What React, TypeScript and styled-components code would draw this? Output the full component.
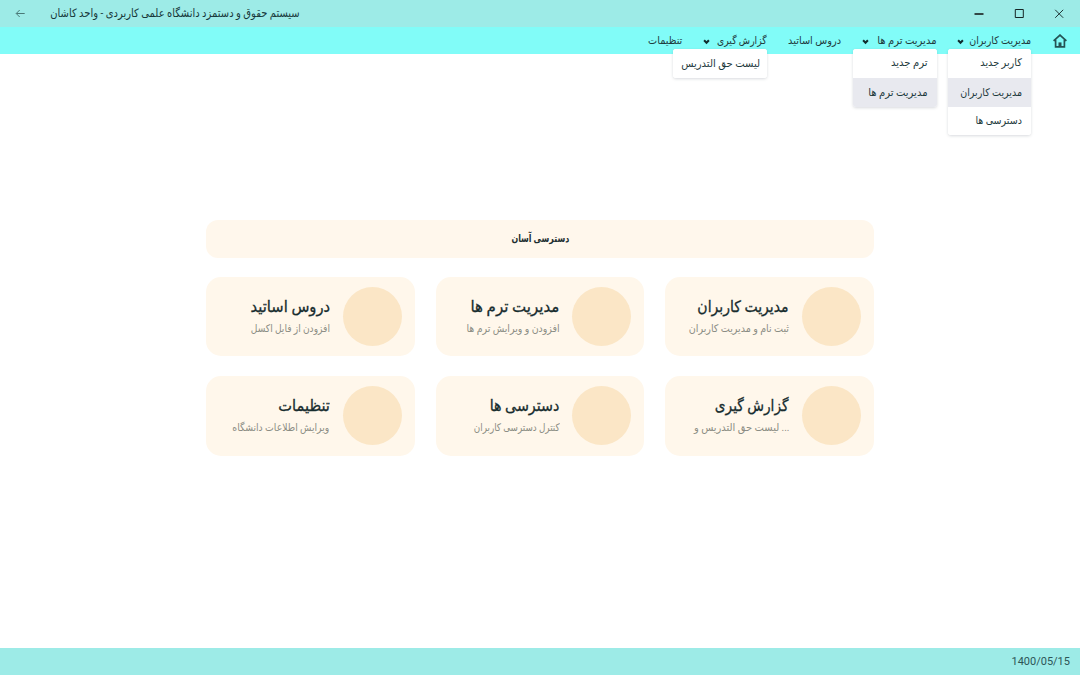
import React from 'react';
import styled, { createGlobalStyle } from 'styled-components';

const GlobalStyle = createGlobalStyle`
  * { box-sizing: border-box; }
  html, body, #root { height: 100%; }
  body {
    margin: 0;
    background: #fff;
    color: #1e3a3d;
    font-family: Roboto, "DejaVu Sans", sans-serif;
    overflow: hidden;
  }
`;

const Window = styled.div`
  display: flex;
  flex-direction: column;
  height: 100vh;
`;

const TitleBar = styled.header`
  display: flex;
  align-items: center;
  height: 27px;
  padding: 0 16px 0 15px;
  background: #9debe7;
`;

const AppTitle = styled.h1`
  margin: 0 auto 0 26px;
  color: #17383a;
  font-weight: 400;
`;

const Controls = styled.div`
  display: flex;
  align-items: center;
  gap: 30px;
`;

const NavBar = styled.nav`
  display: flex;
  direction: rtl;
  align-items: center;
  height: 27px;
  padding-right: 13px;
  background: #81fcf8;
`;

const HomeLink = styled.a`
  display: flex;
  margin-left: 22px;
`;

const NavItem = styled.div<{ $gap: number }>`
  position: relative;
  display: flex;
  align-items: center;
  height: 27px;
  margin-left: ${(p) => p.$gap}px;
`;

const Chevron = styled.svg<{ $gap: number }>`
  margin: 3px ${(p) => p.$gap}px 0 0;
`;

const TextBox = styled.span<{ $w: number; $size: number }>`
  display: flex;
  direction: rtl;
  flex: none;
  width: ${(p) => p.$w}px;
  height: 20px;
  line-height: 20px;
  font-size: ${(p) => p.$size}px;
  white-space: nowrap;
`;

const Glyphs = styled.span<{ $sx: number; $ltr?: boolean }>`
  flex: none;
  direction: ${(p) => (p.$ltr ? 'ltr' : 'rtl')};
  transform: scale(${(p) => p.$sx}, 1.06);
  transform-origin: right center;
`;

type LabelProps = { text: string; width: number; size: number; sx?: number; ltr?: boolean };
const Label = ({ text, width, size, sx = 1, ltr }: LabelProps) => (
  <TextBox $w={width} $size={size}>
    <Glyphs $sx={sx} $ltr={ltr}>{text}</Glyphs>
  </TextBox>
);

const Menu = styled.div<{ $w: number }>`
  position: absolute;
  z-index: 1;
  top: 22px;
  right: 0;
  width: ${(p) => p.$w}px;
  overflow: hidden;
  background: #fff;
  border-radius: 3px;
  box-shadow: 0 1px 3px rgba(40, 50, 70, 0.18);
`;

const MenuItem = styled.div<{ $h: number; $active?: boolean; $pad?: number; $lift?: number }>`
  display: flex;
  align-items: center;
  height: ${(p) => p.$h}px;
  padding: 0 ${(p) => p.$pad ?? 9}px ${(p) => p.$lift ?? 0}px 0;
  background: ${(p) => (p.$active ? '#e8e9ef' : '#fff')};
`;

const Main = styled.main`
  display: flex;
  flex: 1;
  flex-direction: column;
  gap: 19px;
  width: 668px;
  margin: 0 auto;
  padding-top: 166px;
`;

const Banner = styled.section`
  display: flex;
  align-items: center;
  justify-content: center;
  height: 38px;
  background: #fff7ec;
  border-radius: 12px;
  color: #1c2e30;
  font-weight: 700;
`;

const CardGrid = styled.section`
  display: grid;
  direction: rtl;
  grid-template-columns: repeat(3, 1fr);
  gap: 20px 21px;
`;

const Card = styled.article`
  display: flex;
  align-items: center;
  gap: 13px;
  height: 79.3px;
  padding-right: 13px;
  background: #fff7eb;
  border-radius: 15px;
`;

const Disc = styled.div`
  flex: none;
  width: 59px;
  height: 59px;
  background: #fbe6c6;
  border-radius: 50%;
`;

const CardText = styled.div`
  display: flex;
  flex-direction: column;
  gap: 2px;
  padding-top: 3px;
`;

const CardTitle = styled.div`
  color: #172c2e;
  -webkit-text-stroke: 0.3px #172c2e;
`;

const CardNote = styled.div`
  color: #8b8d84;
`;

const StatusBar = styled.footer`
  display: flex;
  align-items: center;
  justify-content: flex-end;
  height: 27px;
  padding: 0 10px 0 0;
  background: #9debe7;
  color: #2d5556;
  font: 11px Roboto, sans-serif;
`;

type Entry = { text: string; width: number; sx?: number; active?: boolean; h: number; pad?: number; lift?: number };
type Nav = { text: string; width: number; sx?: number; gap: number; chevronGap?: number; menuWidth?: number; menu?: Entry[] };

const nav: Nav[] = [
  {
    text: 'مدیریت کاربران', width: 62, sx: 0.95, gap: 20.5, chevronGap: 5, menuWidth: 83,
    menu: [
      { text: 'کاربر جدید', width: 42, sx: 0.97, h: 29, lift: 2 },
      { text: 'مدیریت کاربران', width: 62, sx: 0.95, h: 29, active: true },
      { text: 'دسترسی ها', width: 46, sx: 0.95, h: 28 },
    ],
  },
  {
    text: 'مدیریت ترم ها', width: 60, gap: 20.5, chevronGap: 7.5, menuWidth: 84,
    menu: [
      { text: 'ترم جدید', width: 37, h: 29, lift: 2 },
      { text: 'مدیریت ترم ها', width: 60, h: 29, active: true },
    ],
  },
  { text: 'دروس اساتید', width: 53, sx: 0.98, gap: 21.5 },
  {
    text: 'گزارش گیری', width: 50, sx: 0.925, gap: 20.5, chevronGap: 7.5, menuWidth: 94,
    menu: [{ text: 'لیست حق التدریس', width: 79, h: 29, pad: 7 }],
  },
  { text: 'تنظیمات', width: 35, sx: 0.97, gap: 0 },
];

const cards = [
  { title: 'مدیریت کاربران', tw: 92, ts: 0.935, note: 'ثبت نام و مدیریت کاربران', nw: 101, ns: 0.955 },
  { title: 'مدیریت ترم ها', tw: 90, ts: 1, note: 'افزودن و ویرایش ترم ها', nw: 94, ns: 0.945 },
  { title: 'دروس اساتید', tw: 79, ts: 0.98, note: 'افزودن از فایل اکسل', nw: 79, ns: 0.91 },
  { title: 'گزارش گیری', tw: 74, ts: 0.915, note: 'لیست حق التدریس و ...', nw: 95, ns: 0.99 },
  { title: 'دسترسی ها', tw: 70, ts: 0.95, note: 'کنترل دسترسی کاربران', nw: 86, ns: 0.88 },
  { title: 'تنظیمات', tw: 52, ts: 0.975, note: 'ویرایش اطلاعات دانشگاه', nw: 98, ns: 0.93 },
];

export default function App() {
  return (
    <>
      <GlobalStyle />
      <Window>
        <TitleBar>
          <svg width="10" height="10" viewBox="0 0 10 10" fill="none" stroke="#4a7977" strokeWidth="1">
            <path d="M9.7 4.5H1.4M4.7 1L1.2 4.5 4.7 8" />
          </svg>
          <AppTitle>
            <Label text="سیستم حقوق و دستمزد دانشگاه علمی کاربردی - واحد کاشان" width={249} size={11} sx={0.905} />
          </AppTitle>
          <Controls>
            <svg width="10" height="10" viewBox="0 0 10 10"><path d="M.5 5h9" stroke="#111" strokeWidth="1.5" /></svg>
            <svg width="10" height="10" viewBox="0 0 10 10"><path d="M1.3 .5h8v8h-8z" fill="none" stroke="#162525" /></svg>
            <svg width="10" height="10" viewBox="0 0 10 10"><path d="M1.2 .8l8 8M9.2 .8l-8 8" stroke="#203536" /></svg>
          </Controls>
        </TitleBar>
        <NavBar>
          <HomeLink>
            <svg width="14" height="14" viewBox="0 0 14 14" fill="none" stroke="#245354" strokeWidth="1.7">
              <path d="M.6 6.8L7 1.1l6.4 5.7M2.6 5.8v7.1h8.8V5.8" />
              <path d="M5.5 13V8.4h3V13z" fill="#245354" stroke="none" />
            </svg>
          </HomeLink>
          {nav.map((n) => (
            <NavItem key={n.text} $gap={n.gap}>
              <Label text={n.text} width={n.width} size={10} sx={n.sx} />
              {n.menu && (
                <>
                  <Chevron $gap={n.chevronGap ?? 7} width="7" height="6" viewBox="0 0 7 6" fill="none" stroke="#102c2d" strokeWidth="2">
                    <path d="M1.1 1.2l2.4 2.5 2.4-2.5" />
                  </Chevron>
                  <Menu $w={n.menuWidth!}>
                    {n.menu.map((m) => (
                      <MenuItem key={m.text} $h={m.h} $active={m.active} $pad={m.pad} $lift={m.lift}>
                        <Label text={m.text} width={m.width} size={10} sx={m.sx} />
                      </MenuItem>
                    ))}
                  </Menu>
                </>
              )}
            </NavItem>
          ))}
        </NavBar>
        <Main>
          <Banner>
            <Label text="دسترسی آسان" width={58} size={10} sx={0.79} />
          </Banner>
          <CardGrid>
            {cards.map((c) => (
              <Card key={c.title}>
                <Disc />
                <CardText>
                  <CardTitle><Label text={c.title} width={c.tw} size={15} sx={c.ts} /></CardTitle>
                  <CardNote><Label text={c.note} width={c.nw} size={10} sx={c.ns} ltr /></CardNote>
                </CardText>
              </Card>
            ))}
          </CardGrid>
        </Main>
        <StatusBar>1400/05/15</StatusBar>
      </Window>
    </>
  );
}
